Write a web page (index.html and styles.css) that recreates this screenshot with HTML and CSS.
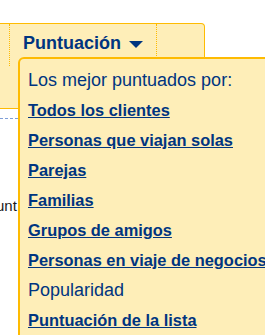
FILE: index.html
```html
<!DOCTYPE html>
<html lang="es">
<head>
    <meta charset="UTF-8">
    <meta name="viewport" content="width=device-width, initial-scale=1.0">
    <title>Ordenar por puntuación</title>
    <link rel="stylesheet" href="styles.css">
</head>
<body>
    <div class="page">
        <div class="sort-bar">
            <div class="sort-tab">
                Puntuación<svg class="caret" width="14" height="7" viewBox="0 0 14 7"><path d="M0 0H14L7 7Z" fill="#003580"/></svg>
            </div>
        </div>
        <div class="results">
            <div class="results-line"></div>
            <p class="results-text">Punt</p>
        </div>

        <!-- Menú desplegable de puntuación -->
        <div class="sort-menu">
            <p class="sort-menu-title">Los mejor puntuados por:</p>
            <a class="sort-link" href="#">Todos los clientes</a>
            <a class="sort-link" href="#">Personas que viajan solas</a>
            <a class="sort-link" href="#">Parejas</a>
            <a class="sort-link" href="#">Familias</a>
            <a class="sort-link" href="#">Grupos de amigos</a>
            <a class="sort-link" href="#">Personas en viaje de negocios</a>
            <p class="sort-menu-item">Popularidad</p>
            <a class="sort-link" href="#">Puntuación de la lista</a>
        </div>
    </div>
</body>
</html>
```

FILE: styles.css
```css
body {
    margin: 0;
    padding: 0;
    background-color: #ffffff;
    font-family: "Liberation Sans", Arial, sans-serif;
    color: #003580;
    overflow: hidden;
}

.page {
    position: relative;
    height: 335px;
    padding-top: 23px;
    box-sizing: border-box;
}

.sort-bar {
    width: 205px;
    height: 86px;
    box-sizing: border-box;
    background-color: #feeeb8;
    border: 1px solid #febb02;
    border-left: none;
    border-radius: 0 4px 0 0;
    padding-left: 9px;
}

.sort-tab {
    display: inline-block;
    height: 42px;
    box-sizing: border-box;
    padding: 8px 13px 0 13px;
    line-height: 22px;
    font-size: 18px;
    font-weight: bold;
    border-left: 1px dotted #febb02;
    border-right: 1px dotted #febb02;
}

.caret {
    margin-left: 8px;
    vertical-align: 1px;
}

.results {
    padding-top: 9px;
}

.results-line {
    border-top: 1px dashed #7f9fd8;
    width: 18px;
}

.results-text {
    margin: 79px 0 0 -14px;
    font-size: 15px;
    line-height: 16px;
    color: #1a1a1a;
}

.sort-menu {
    position: absolute;
    top: 57px;
    left: 18px;
    right: -20px;
    height: 300px;
    display: flex;
    flex-direction: column;
    align-items: flex-start;
    padding: 6px 8px;
    background-color: #feeeb8;
    border: 2px solid #febb02;
    border-radius: 6px 0 0 0;
}

.sort-menu-title,
.sort-menu-item {
    margin: 0;
    font-size: 18px;
    line-height: 30px;
}

.sort-link {
    font-size: 16.4px;
    font-weight: bold;
    line-height: 30px;
    color: #003580;
    text-decoration: underline;
}
```
